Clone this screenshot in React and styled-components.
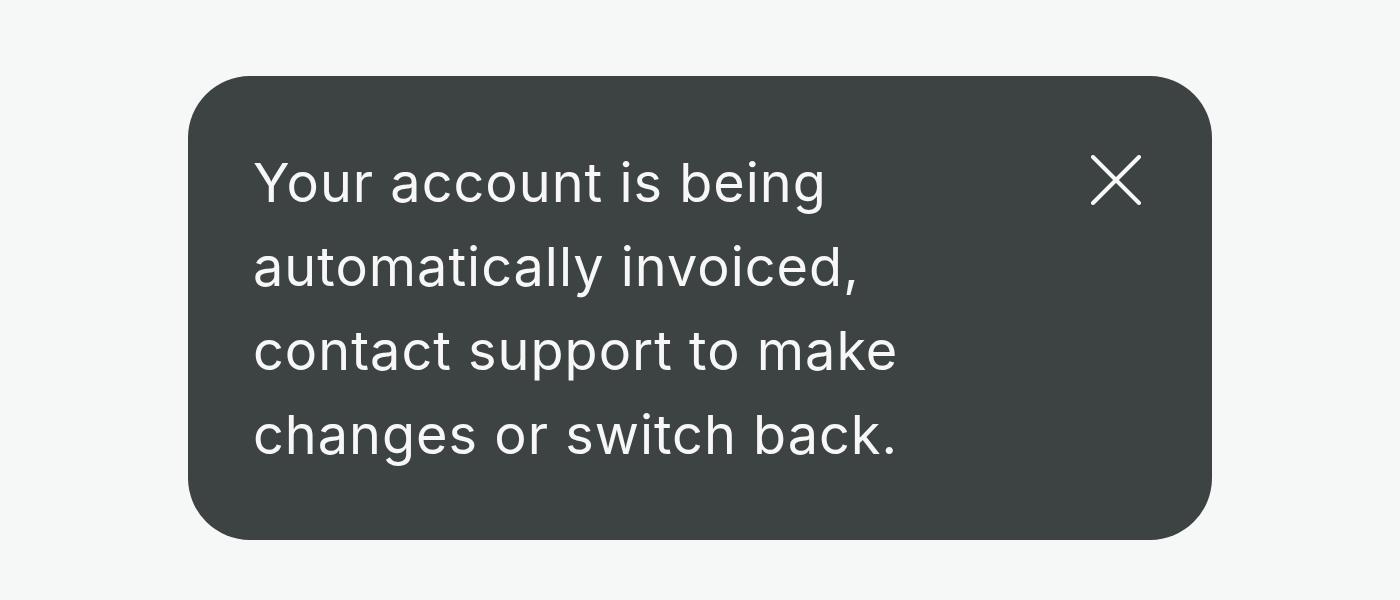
import React from "react";
import styled, { createGlobalStyle } from "styled-components";

const Global = createGlobalStyle`
  html, body { margin: 0; padding: 0; background: #f6f7f7; }
  body { font-family: Inter, "Noto Sans", sans-serif; }
`;

const Page = styled.div`
  width: 1400px;
  height: 600px;
  display: flex;
  justify-content: center;
  padding-top: 76px;
  box-sizing: border-box;
`;

const Toast = styled.div`
  width: 1024px;
  height: 464px;
  box-sizing: border-box;
  background: #3d4242;
  border-radius: 62px;
  padding: 65px 64px 0 65px;
  display: flex;
  justify-content: space-between;
  align-items: flex-start;
`;

const Message = styled.p`
  margin: 0;
  max-width: 720px;
  color: #f7f7f7;
  font-size: 54px;
  line-height: 84px;
  letter-spacing: 1px;
  font-weight: 400;
`;

const Close = styled.button`
  width: 64px;
  height: 64px;
  margin-top: 7px;
  padding: 0;
  border: none;
  background: transparent;
  display: flex;
  align-items: center;
  justify-content: center;
  cursor: pointer;
`;

export default function App() {
  return (
    <>
      <Global />
      <Page>
        <Toast>
          <Message>
            Your account is being automatically invoiced, contact support to
            make changes or switch back.
          </Message>
          <Close aria-label="Close">
            <svg width="50" height="50" viewBox="0 0 50 50" fill="none">
              <path
                d="M2 2L48 48M48 2L2 48"
                stroke="#f7f7f7"
                strokeWidth="4"
                strokeLinecap="round"
              />
            </svg>
          </Close>
        </Toast>
      </Page>
    </>
  );
}
